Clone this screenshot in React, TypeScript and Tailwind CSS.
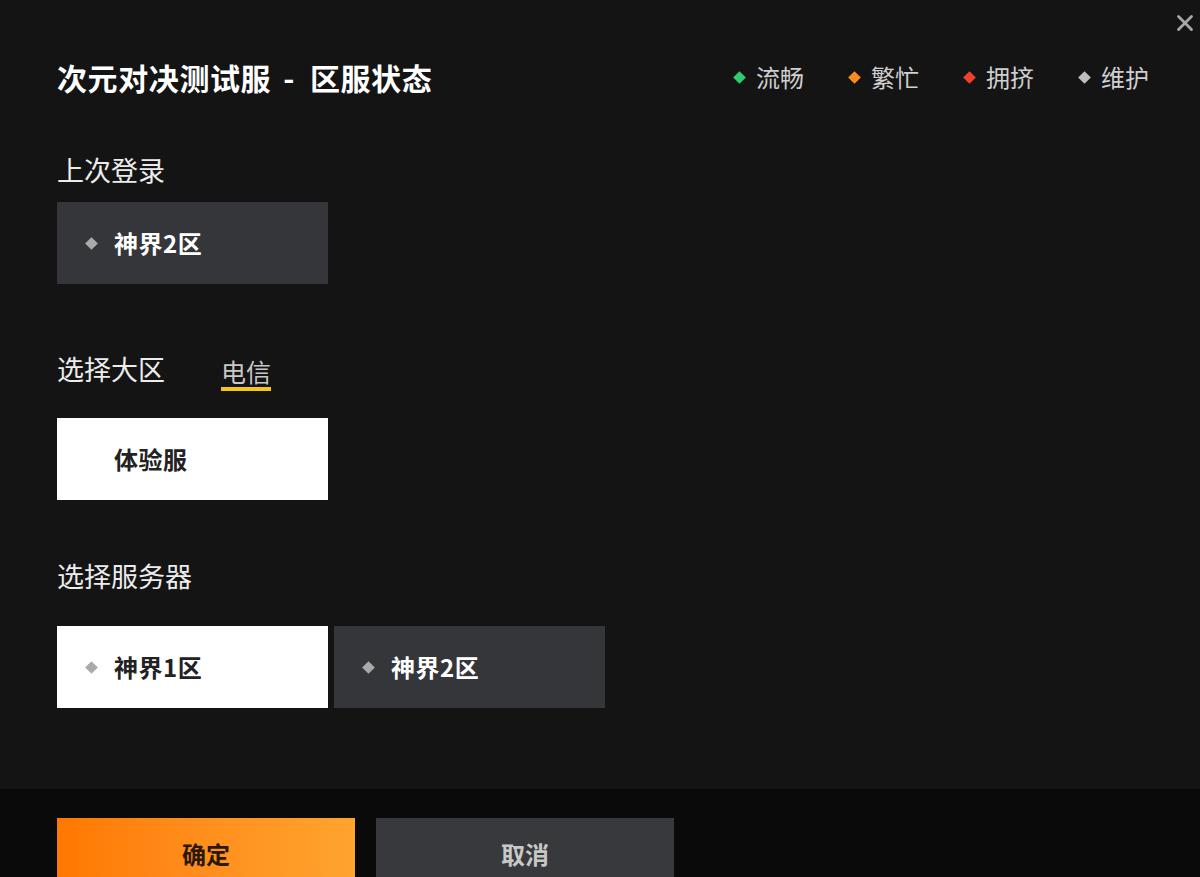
import { X } from "lucide-react";

const font = { fontFamily: '"Noto Sans CJK SC", "Noto Sans", sans-serif' };

const legend = [
  { label: "流畅", color: "bg-[#2ecc71]" },
  { label: "繁忙", color: "bg-[#ff8a1f]" },
  { label: "拥挤", color: "bg-[#f0412e]" },
  { label: "维护", color: "bg-[#bdbdbd]" },
];

function Diamond({ className }: { className: string }) {
  return <span className={`inline-block w-[9px] h-[9px] rotate-45 ${className}`} />;
}

function ServerCard({ name, active, dot = true }: { name: string; active?: boolean; dot?: boolean }) {
  return (
    <div
      className={`w-[271px] h-[82px] flex items-center pl-[30px] ${
        active ? "bg-white text-[#222]" : "bg-[#35363a] text-white"
      }`}
    >
      <span className="w-[27px] flex items-center">{dot && <Diamond className="bg-[#aaaaaa]" />}</span>
      <span className="text-[24px] font-bold leading-none tracking-[0.5px]">{name}</span>
    </div>
  );
}

export default function App() {
  return (
    <div className="relative h-[877px] overflow-hidden bg-[#141415] flex flex-col" style={font}>
      <button className="absolute top-[10px] right-[2px] text-[#a8a8a8]">
        <X size={26} strokeWidth={2.6} />
      </button>

      <div className="px-[57px]">
        <div className="pt-[57px] flex items-center justify-between mr-[-6px]">
          <h1 className="text-[30px] leading-[40px] font-bold text-white tracking-[0.6px]">
            次元对决测试服<span className="pl-[12px] pr-[15px]">-</span>区服状态
          </h1>
          <div className="flex items-center gap-[46px]">
            {legend.map((l) => (
              <div key={l.label} className="flex items-center gap-[12px]">
                <Diamond className={l.color} />
                <span className="text-[24px] leading-none text-[#cfcfcf]">{l.label}</span>
              </div>
            ))}
          </div>
        </div>

        <div className="mt-[55px] text-[27px] leading-[36px] text-[#ececec]">上次登录</div>
        <div className="mt-[14px]">
          <ServerCard name="神界2区" />
        </div>

        <div className="mt-[67px] flex items-start h-[40px]">
          <span className="text-[27px] leading-[36px] text-[#ececec]">选择大区</span>
          <div className="ml-[56px] flex flex-col items-stretch pt-[4px]">
            <span className="text-[25px] leading-[32px] text-[#c8c8c8]">电信</span>
            <span className="h-[4px] bg-[#f5c518]" />
          </div>
        </div>
        <div className="mt-[27px]">
          <div className="w-[271px] h-[82px] flex items-center pl-[57px] bg-white text-[#222]">
            <span className="text-[24px] font-bold leading-none tracking-[0.5px]">体验服</span>
          </div>
        </div>

        <div className="mt-[58px] text-[27px] leading-[36px] text-[#ececec]">选择服务器</div>
        <div className="mt-[32px] flex gap-[6px]">
          <ServerCard name="神界1区" active />
          <ServerCard name="神界2区" />
        </div>
      </div>

      <div className="mt-[81px] flex-1 bg-[#0a0a0a] px-[57px] pt-[29px] flex gap-[21px]">
        <button className="w-[298px] h-[72px] bg-gradient-to-r from-[#ff7800] to-[#ffa42e] text-[#2a1805] text-[24px] font-bold">
          确定
        </button>
        <button className="w-[298px] h-[72px] bg-[#38393d] text-[#c8c8c8] text-[24px] font-bold">
          取消
        </button>
      </div>
    </div>
  );
}
